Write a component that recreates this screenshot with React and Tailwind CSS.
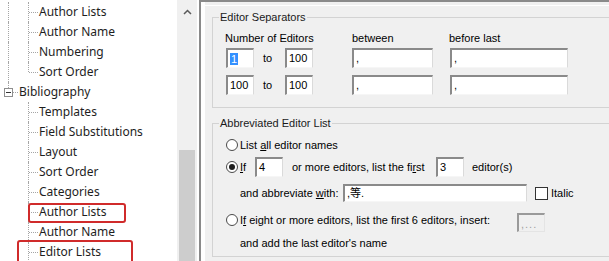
import React from "react";

const TREE_FONT = "font-['Noto_Sans','DejaVu_Sans',sans-serif]";
const UI_FONT = "font-['Liberation_Sans','Noto_Sans_CJK_SC',sans-serif]";

function ChildRow({ label, rootLine, last, children }) {
  return (
    <div className="relative flex h-[20px]">
      <div className="w-[18px] flex shrink-0">
        {rootLine && (
          <div className="ml-[8px] h-full border-l border-dotted border-[#a5a5a5]" />
        )}
      </div>
      <div className="w-[20px] flex shrink-0">
        <div
          className={
            last
              ? "ml-[10px] h-1/2 border-l border-dotted border-[#a5a5a5]"
              : "ml-[10px] h-full border-l border-dotted border-[#a5a5a5]"
          }
        />
        <div className="w-[9px] self-center border-t border-dotted border-[#a5a5a5]" />
      </div>
      <span className="ml-[1px] leading-[20px] whitespace-nowrap">{label}</span>
      {children}
    </div>
  );
}

function RootRow({ label }) {
  return (
    <div className="flex h-[20px]">
      <div className="w-[18px] flex flex-col shrink-0">
        <div className="ml-[8px] h-[6px] border-l border-dotted border-[#a5a5a5]" />
        <div className="flex items-center h-[9px]">
          <div className="ml-[4px] w-[9px] h-[9px] border border-[#8e8e8e] bg-white flex items-center justify-center">
            <div className="w-[5px] h-px bg-[#333]" />
          </div>
          <div className="w-[5px] border-t border-dotted border-[#a5a5a5]" />
        </div>
      </div>
      <span className="ml-[1px] leading-[20px] whitespace-nowrap">{label}</span>
    </div>
  );
}

function Box({ className = "", children }) {
  return (
    <div
      className={
        "h-[20px] bg-white border-t-2 border-l-2 border-r border-b border-t-[#8a8a8a] border-l-[#8a8a8a] border-r-[#dadada] border-b-[#f6f6f6] pl-[2px] flex items-center leading-[13px] shrink-0 " +
        className
      }
    >
      {children}
    </div>
  );
}

function Radio({ checked }) {
  return (
    <div className="w-[12px] h-[12px] rounded-full border border-[#4a4a4a] bg-white flex items-center justify-center shrink-0">
      {checked && <div className="w-[6px] h-[6px] rounded-full bg-[#1f1f1f]" />}
    </div>
  );
}

export default function App() {
  return (
    <div className="w-[609px] h-[261px] overflow-hidden flex bg-white">
      {/* Tree pane */}
      <div className={"w-[177px] shrink-0 h-full overflow-hidden bg-white pt-[2px] text-[12px] text-[#1e1e1e] " + TREE_FONT}>
        <ChildRow label="Author Lists" rootLine />
        <ChildRow label="Author Name" rootLine />
        <ChildRow label="Numbering" rootLine />
        <ChildRow label="Sort Order" rootLine last />
        <RootRow label="Bibliography" />
        <ChildRow label="Templates" />
        <ChildRow label="Field Substitutions" />
        <ChildRow label="Layout" />
        <ChildRow label="Sort Order" />
        <ChildRow label="Categories" />
        <ChildRow label="Author Lists">
          <div className="absolute left-[28px] top-[1px] w-[98px] h-[20px] border-2 border-[#d02b2b] rounded-[3px]" />
        </ChildRow>
        <ChildRow label="Author Name" />
        <ChildRow label="Editor Lists">
          <div className="absolute left-[17px] top-[-2px] w-[116px] h-[24px] border-2 border-[#d02b2b] rounded-[3px]" />
        </ChildRow>
      </div>

      {/* Scrollbar */}
      <div className="w-[20px] shrink-0 h-full bg-[#f0f0f0] flex flex-col">
        <div className="h-[24px] flex items-center justify-center">
          <svg width="9" height="6" viewBox="0 0 9 6">
            <polyline points="1,5 4.5,1.5 8,5" fill="none" stroke="#5a5a5a" strokeWidth="1.5" />
          </svg>
        </div>
        <div className="h-[126px]" />
        <div className="flex-1 mx-[2px] bg-[#cdcdcd]" />
      </div>
      <div className="w-[2px] shrink-0 h-full bg-white" />

      {/* Right panel */}
      <div className={"flex-1 min-w-0 h-full border-t-2 border-l-2 border-[#8a8a8a] bg-[#f0f0f0] overflow-hidden text-[11px] text-black " + UI_FONT}>
        <div className="h-full border-l-4 border-l-white flex flex-col">
          <div className="h-[3px]" />
          <div className="h-px bg-white" />

          <fieldset className="mt-[4px] ml-[7px] w-[410px] shrink-0 border border-[#d3d3d3] pl-[6px] pb-[12px] min-w-0">
            <legend className="px-[1px] leading-[14px] text-[#1a1a1a]">Editor Separators</legend>
            <div className="mt-[7px] ml-[6px] flex h-[14px] leading-[14px]">
              <span className="w-[127px]">Number of Editors</span>
              <span className="w-[97px]">between</span>
              <span>before last</span>
            </div>
            <div className="mt-[3px] ml-[7px] flex items-center h-[20px]">
              <Box className="w-[28px]">
                <span className="bg-[#3390ff] text-white px-[1px] leading-[12px]">1</span>
              </Box>
              <span className="w-[31px] pl-[9px]">to</span>
              <Box className="w-[28px]">100</Box>
              <Box className="w-[81px] ml-[39px]">,</Box>
              <Box className="w-[118px] ml-[17px]">,</Box>
            </div>
            <div className="mt-[7px] ml-[7px] flex items-center h-[20px]">
              <Box className="w-[28px]">100</Box>
              <span className="w-[31px] pl-[9px]">to</span>
              <Box className="w-[28px]">100</Box>
              <Box className="w-[81px] ml-[39px]">,</Box>
              <Box className="w-[118px] ml-[17px]">,</Box>
            </div>
          </fieldset>

          <fieldset className="mt-[8px] ml-[7px] w-[410px] shrink-0 border border-[#d3d3d3] pl-[6px] pb-[3px] min-w-0">
            <legend className="px-[1px] leading-[14px] text-[#1a1a1a]">Abbreviated Editor List</legend>
            <div className="mt-[5px] ml-[7px] flex items-center h-[20px]">
              <Radio />
              <span className="ml-[2px]">
                List <u>a</u>ll editor names
              </span>
            </div>
            <div className="mt-[2px] ml-[7px] flex items-center h-[20px]">
              <Radio checked />
              <span className="ml-[2px] w-[15px] shrink-0">
                <u>I</u>f
              </span>
              <Box className="w-[28px]">4</Box>
              <span className="ml-[9px] w-[144px] shrink-0 whitespace-nowrap">
                or more editors, list the fi<u>r</u>st
              </span>
              <Box className="w-[28px]">3</Box>
              <span className="ml-[8px]">editor(s)</span>
            </div>
            <div className="mt-[6px] ml-[21px] flex items-center h-[20px]">
              <span className="w-[103px] shrink-0 whitespace-nowrap">
                and abbreviate <u>w</u>ith:
              </span>
              <Box className="w-[184px] !h-[18px]">,等.</Box>
              <div className="ml-[8px] w-[13px] h-[13px] border border-[#333] bg-white shrink-0" />
              <span className="ml-[3px]">Italic</span>
            </div>
            <div className="mt-[7px] ml-[7px] flex items-center h-[20px]">
              <Radio />
              <span className="ml-[2px] w-[277px] shrink-0 whitespace-nowrap">
                I<u>f</u> eight or more editors, list the first 6 editors, insert:
              </span>
              <div className="mt-[4px] w-[28px] h-[19px] shrink-0 border-t-2 border-l-2 border-r border-b border-t-[#9a9a9a] border-l-[#9a9a9a] border-r-[#e4e4e4] border-b-[#e4e4e4] bg-[#f0f0f0] text-[#a0a0a0] pl-[2px] flex items-end leading-[13px] tracking-[1px]">
                ,...
              </div>
            </div>
            <div className="mt-[3px] ml-[21px] h-[20px] flex items-center">
              and add the last editor's name
            </div>
          </fieldset>
        </div>
      </div>
    </div>
  );
}
